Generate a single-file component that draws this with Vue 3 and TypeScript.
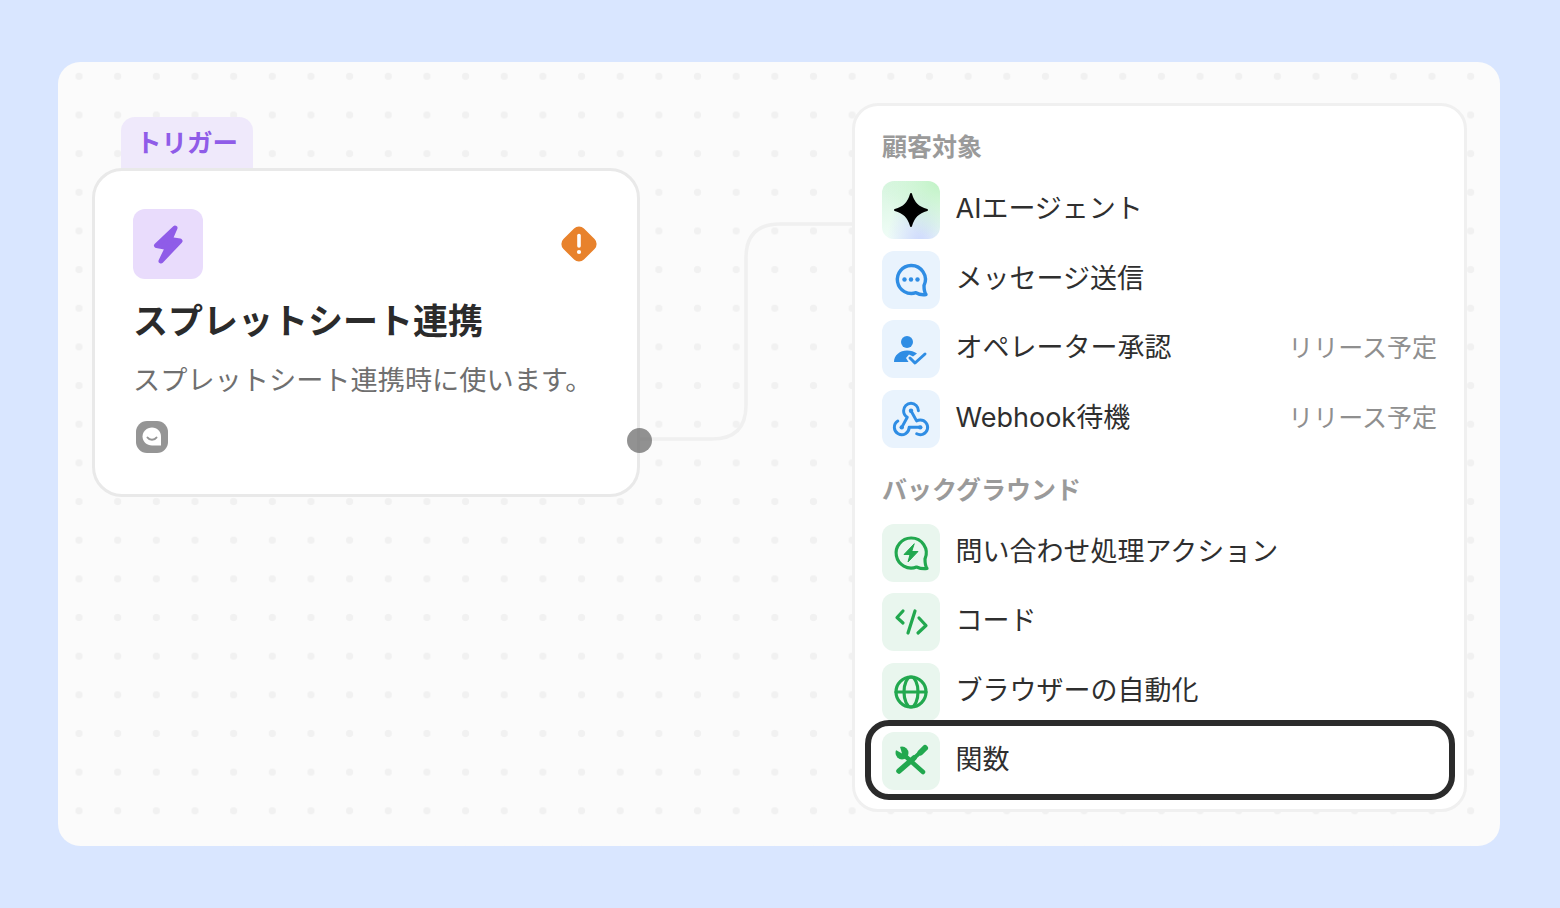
<script setup lang="ts">
interface FlowRow {
  name: string;
  icon: string;
  tone: "ai" | "blue" | "green";
  status?: string;
}

const customerRows: FlowRow[] = [
  { name: "AIエージェント", icon: "star", tone: "ai" },
  { name: "メッセージ送信", icon: "chat", tone: "blue" },
  { name: "オペレーター承認", icon: "person", tone: "blue", status: "リリース予定" },
  { name: "Webhook待機", icon: "webhook", tone: "blue", status: "リリース予定" },
];

const backgroundRows: FlowRow[] = [
  { name: "問い合わせ処理アクション", icon: "zap", tone: "green" },
  { name: "コード", icon: "code", tone: "green" },
  { name: "ブラウザーの自動化", icon: "globe", tone: "green" },
  { name: "関数", icon: "tools", tone: "green" },
];

const sections = [
  { title: "顧客対象", rows: customerRows },
  { title: "バックグラウンド", rows: backgroundRows },
];
</script>

<template>
  <div class="page">
    <main class="canvas">
      <svg class="connector" width="1442" height="784" viewBox="0 0 1442 784" fill="none">
        <path d="M581 377H654Q688 377 688 343V196Q688 162 722 162H796" />
      </svg>

      <section class="trigger">
        <div class="tab">トリガー</div>
        <div class="card">
          <div class="card-head">
            <div class="bolt-box">
              <svg width="70" height="70" viewBox="0 0 70 70">
                <path d="M42 19 23.500 36.500 34.500 38.500 28 52 47 32 37 30.500Z" fill="#8f5ce8" stroke="#8f5ce8" stroke-width="5" stroke-linejoin="round" />
              </svg>
            </div>
            <svg class="warn" width="36" height="36" viewBox="0 0 36 36">
              <rect x="3.500" y="3.500" width="29" height="29" rx="7" transform="rotate(45 18 18)" fill="#e8822c" />
              <path d="M18 9.500V20" stroke="#fff" stroke-width="3.600" stroke-linecap="round" />
              <circle cx="18" cy="26" r="2.100" fill="#fff" />
            </svg>
          </div>
          <h1>スプレットシート連携</h1>
          <p>スプレットシート連携時に使います。</p>
          <svg class="channel" width="34" height="34" viewBox="0 0 34 34">
            <rect x="1" y="1" width="32" height="32" rx="11" fill="#959595" />
            <path d="M17 7.500C11.800 7.500 7.500 11.500 7.500 16.500S11.800 25.500 17 25.500H26L26 16.500C26 11.500 22.200 7.500 17 7.500Z" fill="#fff" />
            <path d="M12.500 17.500C14.500 20.500 19.500 20.500 21.500 17.500" stroke="#959595" stroke-width="2" stroke-linecap="round" fill="none" />
          </svg>
          <span class="port"></span>
        </div>
      </section>

      <aside class="panel">
        <template v-for="section in sections" :key="section.title">
          <h2>{{ section.title }}</h2>
          <ul>
            <li v-for="row in section.rows" :key="row.name" :class="{ focused: row.icon === 'tools' }">
              <span class="icon-box" :class="row.tone">
                <svg width="58" height="58" viewBox="0 0 58 58" fill="none" stroke-linecap="round" stroke-linejoin="round">
                  <path v-if="row.icon === 'star'" d="M29 13C31.500 22 36 26.500 45 29C36 31.500 31.500 36 29 45C26.500 36 22 31.500 13 29C22 26.500 26.500 22 29 13Z" fill="#000" stroke="#000" stroke-width="2" />
                  <g v-else-if="row.icon === 'chat'">
                    <path d="M29 14.500A14 14 0 1 0 34 41.700C37 43.500 41 44 44 43.500C42.500 41.500 42 38.500 42 34.500A14 14 0 0 0 29 14.500Z" stroke="#2f8de4" stroke-width="3.400" />
                    <circle cx="22.500" cy="28.500" r="2.200" fill="#2f8de4" />
                    <circle cx="29" cy="28.500" r="2.200" fill="#2f8de4" />
                    <circle cx="35.500" cy="28.500" r="2.200" fill="#2f8de4" />
                  </g>
                  <g v-else-if="row.icon === 'person'">
                    <circle cx="25" cy="22" r="6" fill="#2f8de4" />
                    <path d="M12 42C12 35 18 30.500 25 30.500C29 30.500 32 31.500 35 33.500L31 36.500 27 34.500 24 38 26.500 42Z" fill="#2f8de4" />
                    <path d="M28 38 33 43 43 34" stroke="#2f8de4" stroke-width="3" />
                  </g>
                  <g v-else-if="row.icon === 'webhook'" transform="translate(6.800 5.900) scale(1.850)" stroke="#2f8de4" stroke-width="1.600">
                    <path d="M4.876 13.610a4 4 0 1 0 6.124 3.390h6" />
                    <path d="M15.066 20.502a4 4 0 1 0 1.934-7.502c-.706 0-1.424.179-2 .5l-3-5.500" />
                    <path d="M16 8a4 4 0 1 0-8 0c0 1.506.770 2.818 2 3.500l-3 5.500" />
                    <circle cx="12" cy="8" r="1.200" fill="#2f8de4" stroke="none" />
                    <circle cx="7" cy="17" r="1.200" fill="#2f8de4" stroke="none" />
                    <circle cx="17" cy="17" r="1.200" fill="#2f8de4" stroke="none" />
                  </g>
                  <g v-else-if="row.icon === 'zap'">
                    <path d="M29 14A15 15 0 1 0 34.500 43C38 44.500 42 45 45 44.500C43.500 42.500 43 39 43 35A15 15 0 0 0 29 14Z" stroke="#22a84f" stroke-width="3.200" />
                    <path d="M32 20 22 30.500H28L26 38 36 27.500H30Z" fill="#22a84f" stroke="#22a84f" stroke-width="1" />
                  </g>
                  <g v-else-if="row.icon === 'code'" stroke="#22a84f" stroke-width="3.200">
                    <path d="M21 18 15 24.500 21 30" />
                    <path d="M33 18 26 40" />
                    <path d="M37 25 44 32.500 36 40" />
                  </g>
                  <g v-else-if="row.icon === 'globe'" stroke="#22a84f" stroke-width="3.200">
                    <circle cx="29" cy="29" r="15" />
                    <ellipse cx="29" cy="29" rx="7" ry="15" />
                    <path d="M14 29H44" />
                  </g>
                  <g v-else>
                    <path d="M22 23 41 40" stroke="#22a84f" stroke-width="4.500" />
                    <circle cx="20" cy="21" r="6.500" fill="#22a84f" />
                    <path d="M20 21.500 13 17.500 17.500 13Z" fill="#e9f6ee" />
                    <path d="M17 39 32 26" stroke="#22a84f" stroke-width="5.500" />
                    <path d="M31 27 42 17" stroke="#22a84f" stroke-width="4" />
                    <path d="M38.500 20.500 43 16" stroke="#22a84f" stroke-width="6" />
                  </g>
                </svg>
              </span>
              <span class="name">{{ row.name }}</span>
              <span v-if="row.status" class="status">{{ row.status }}</span>
            </li>
          </ul>
        </template>
      </aside>
    </main>
  </div>
</template>

<style>
html,
body {
  margin: 0;
  background: #d9e6ff;
}
</style>

<style scoped>
.page {
  box-sizing: border-box;
  width: 1560px;
  height: 908px;
  padding: 62px 60px 62px 58px;
  background: #d9e6ff;
  font-family: Inter, "Noto Sans CJK JP", sans-serif;
  color: #2f2f2f;
}

.canvas {
  position: relative;
  display: flex;
  justify-content: space-between;
  align-items: flex-start;
  box-sizing: border-box;
  height: 784px;
  padding: 41px 33px 0 34px;
  border-radius: 22px;
  background-color: #fbfbfb;
  background-image: radial-gradient(circle, #f1f1f1 3.4px, transparent 4px);
  background-size: 38.67px 38.67px;
  background-position: 1.7px -5px;
}

.connector {
  position: absolute;
  top: 0;
  left: 0;
}

.connector path {
  stroke: #f0f0f0;
  stroke-width: 3.5;
}

.trigger {
  position: relative;
  width: 548px;
  margin-top: 14px;
}

.tab {
  box-sizing: border-box;
  width: 132px;
  height: 60px;
  margin-left: 29px;
  padding-top: 9px;
  border-radius: 14px 14px 0 0;
  background: #efe9fb;
  color: #8f5ce8;
  font-size: 25.5px;
  font-weight: 700;
  line-height: 34px;
  text-align: center;
}

.card {
  position: relative;
  box-sizing: border-box;
  height: 329px;
  margin-top: -9px;
  padding: 38px 40px 0 38px;
  border: 3px solid #e9e9e9;
  border-radius: 30px;
  background: #fff;
}

.card-head {
  display: flex;
  justify-content: space-between;
  align-items: center;
}

.bolt-box {
  width: 70px;
  height: 70px;
  border-radius: 12px;
  background: #e9dcfc;
}

.card h1 {
  margin: 18px 0 0;
  color: #2b2b2b;
  font-size: 35px;
  font-weight: 700;
  line-height: 48px;
}

.card p {
  margin: 17px 0 0;
  color: #6f6f6f;
  font-size: 27.2px;
  line-height: 38px;
}

.channel {
  display: block;
  margin: 20px 0 0 2px;
}

.port {
  position: absolute;
  top: 257px;
  right: -15px;
  width: 25px;
  height: 25px;
  border-radius: 50%;
  background: rgba(110, 110, 110, 0.75);
}

.panel {
  position: relative;
  box-sizing: border-box;
  width: 615px;
  height: 709px;
  padding: 24px 27px 20px;
  border: 3px solid #f0f0f0;
  border-radius: 26px;
  background: #fff;
}

.panel h2 {
  margin: 0 0 17px;
  color: #9a9a9a;
  font-size: 25px;
  font-weight: 700;
  line-height: 34px;
}

.panel ul {
  display: flex;
  flex-direction: column;
  gap: 11.5px;
  margin: 0 0 25px;
  padding: 0;
  list-style: none;
}

.panel li {
  position: relative;
  display: flex;
  align-items: center;
  gap: 15.5px;
  height: 58px;
}

.panel li.focused::after {
  content: "";
  position: absolute;
  top: -12px;
  right: -18px;
  bottom: -10px;
  left: -17px;
  border: 6px solid #2b2b2b;
  border-radius: 24px;
}

.icon-box {
  flex: none;
  width: 58px;
  height: 58px;
  border-radius: 12px;
}

.icon-box svg {
  display: block;
}

.icon-box.blue {
  background: #e9f3fd;
}

.icon-box.green {
  background: #e9f6ee;
}

.icon-box.ai {
  background:
    radial-gradient(circle at 100% 0, #bff2c4 0, rgba(191, 242, 196, 0) 70%),
    radial-gradient(ellipse at 65% 110%, #cdd8fd 0, rgba(205, 216, 253, 0) 62%),
    radial-gradient(circle at 0 0, #d6f5de 0, rgba(214, 245, 222, 0) 70%),
    #f0fdf7;
}

.name {
  margin-top: -2px;
  font-size: 27px;
  line-height: 38px;
}

.status {
  margin-left: auto;
  margin-top: -2px;
  color: #8f8f8f;
  font-size: 25px;
  line-height: 34px;
}
</style>
